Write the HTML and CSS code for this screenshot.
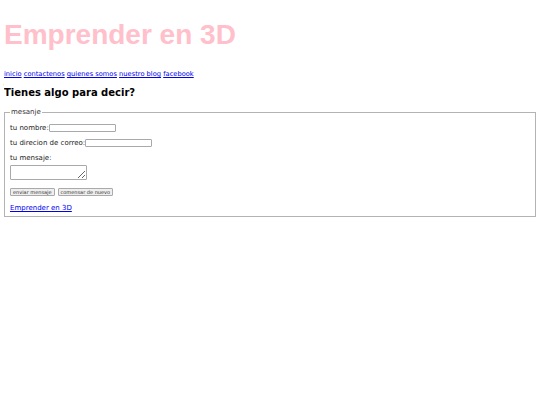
FILE: index.html
```html
<!DOCTYPE html>
<html lang="es">
<head>
<meta charset="utf-8">
<title>Emprender en 3D</title>
<link rel="stylesheet" href="styles.css">
</head>
<body>
<h1 class="title">Emprender en 3D</h1>
<nav class="nav"><a href="#">inicio</a> <a href="#">contactenos</a> <a href="#">quienes somos</a> <a href="#">nuestro blog</a> <a href="#">facebook</a></nav>
<h2 class="heading">Tienes algo para decir?</h2>
<form class="form">
<fieldset class="box">
<legend class="legend">mesanje</legend>
<p class="row row-first">tu nombre:<input class="field" type="text"></p>
<p class="row">tu direcion de correo:<input class="field" type="text"></p>
<p class="row">tu mensaje:</p>
<textarea class="area"></textarea>
<p class="row row-buttons"><button class="btn" type="submit">enviar mensaje</button><button class="btn" type="reset">comensar de nuevo</button></p>
<p class="row row-link"><a href="#">Emprender en 3D</a></p>
</fieldset>
</form>
</body>
</html>
```
FILE: styles.css
```css
body {
  margin: 4px;
  font-family: "DejaVu Sans", Verdana, sans-serif;
  font-size: 7px;
  color: #000;
  background: #fff;
}
a { color: #0000ee; }
.title {
  font-family: "Liberation Sans", Arial, sans-serif;
  font-size: 28px;
  font-weight: bold;
  color: #ffc0cb;
  margin: 15px 0 19px;
  line-height: 32px;
}
.nav {
  font-size: 6.7px;
  line-height: 9px;
  margin: 0;
}
.heading {
  font-size: 10px;
  font-weight: bold;
  line-height: 12px;
  margin: 8px 0 9px;
}
.form { margin: 0; }
.box {
  margin: 0;
  padding: 0 5px 3px;
  border: 1px solid #b3b3b3;
}
.legend {
  padding: 0 1px;
  line-height: 8px;
  color: #333;
}
.row {
  margin: 6px 0 0;
  line-height: 9px;
  color: #222;
}
.row-first { margin-top: 8px; }
.row-buttons {
  margin-top: 8px;
  display: flex;
  gap: 3px;
}
.row-link { margin-top: 8px; }
.field {
  box-sizing: border-box;
  width: 67px;
  height: 8px;
  padding: 0 1px;
  border: 1px solid #a9a9a9;
  border-radius: 1px;
  font-size: 5px;
  vertical-align: middle;
  margin: 0;
}
.area {
  display: block;
  box-sizing: border-box;
  width: 77px;
  height: 15px;
  padding: 0 1px;
  margin: 2px 0 0;
  border: 1px solid #a9a9a9;
  border-radius: 1px;
  font-size: 5px;
}
.btn {
  box-sizing: border-box;
  height: 8px;
  font-family: "DejaVu Sans", Verdana, sans-serif;
  font-size: 5px;
  line-height: 6px;
  padding: 0 2px;
  border: 1px solid #aaa;
  border-radius: 1px;
  background: #efefef;
  color: #333;
  margin: 0;
}
```
